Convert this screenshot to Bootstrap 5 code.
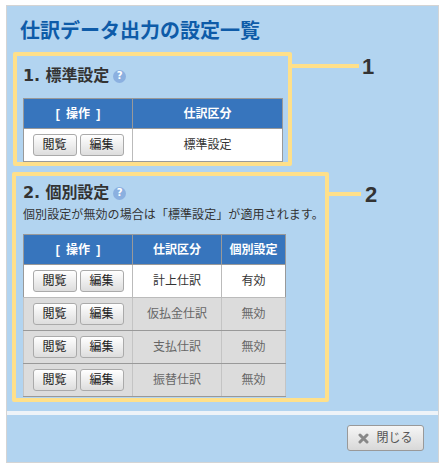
<!DOCTYPE html>
<html lang="ja">
<head>
<meta charset="utf-8">
<title>仕訳データ出力の設定一覧</title>
<link href="https://cdn.jsdelivr.net/npm/bootstrap@5.3.0/dist/css/bootstrap.min.css" rel="stylesheet">
<style>
html,body{background:#fff;margin:0;height:100%}
body{font-family:"Liberation Sans","Noto Sans CJK JP",sans-serif;font-size:12px;color:#333;overflow:hidden}
.win{position:relative;width:433px;height:458px;margin:5px 0 0 6px;background:#b2d4f0;border:1px solid #d4d4d4;box-sizing:border-box}
.win-title{margin:0;padding:12px 0 0 13px;height:46px;font-size:20px;line-height:26px;font-weight:700;color:#0e5ba8}
.note-a,.note-b{border:4px solid #ffe08a;border-radius:2px;box-sizing:border-box}
.note-a{width:279px;height:114px;margin-left:6px;padding:8px 0 0 6px}
.note-b{width:317px;height:230px;margin:6px 0 0 5px;padding:5px 0 0 7px}
.sec-title{margin:0;font-family:"DejaVu Sans","Noto Sans CJK JP",sans-serif;font-size:16px;line-height:24px;font-weight:700;color:#333;display:flex;align-items:center;gap:4px;letter-spacing:-.1px}
.sec-note{margin:1px 0 0;line-height:18px;font-size:12px;color:#333;letter-spacing:.08px}
.qm{display:inline-flex;align-items:center;justify-content:center;width:13px;height:13px;border-radius:50%;background:#8bb0e0;color:#fff;font-size:10px;font-weight:700;line-height:1}
.tbl{border-collapse:collapse;margin:0;table-layout:fixed;background:#fff;border:1px solid #999}
.note-a .tbl{margin-top:10px;width:260px}
.note-b .tbl{margin-top:10px;width:263px}
.tbl th{background:#3775bd;color:#fff;font-size:12px;font-weight:700;height:30px;padding:0;text-align:center;border:1px solid #999;word-spacing:3px}
.tbl td{height:33px;padding:0;text-align:center;border:1px solid #bbb;color:#333;font-size:12px;vertical-align:middle}
.tbl tr.off td{background:#dcdcdc;color:#666;border-color:#c4c4c4;border-top-color:#999;border-bottom-color:#999}
.tbl td:first-child{border-left-color:#999}
.tbl td:last-child{border-right-color:#999}
.tbl tr:last-child td{border-bottom-color:#999}
.c1{width:109px}.c3{width:64px}
.btn-pair{display:flex;justify-content:center;gap:3px}
.mini{width:44px;height:22px;padding:0;font-size:12px;line-height:20px;color:#222;background:linear-gradient(#fff,#ddd);border:1px solid #aaa;border-radius:3px}
.rule{height:4px;background:#eef3f8;margin-top:9px}
.foot{display:flex;justify-content:flex-end;padding:10px 14px 0 0}
.shut{display:inline-flex;align-items:center;justify-content:center;gap:7px;width:77px;height:26px;padding:0;font-size:12px;color:#555;background:linear-gradient(#f6f6f6,#d8d8d8);border:1px solid #999;border-radius:3px}
.lead-line{position:absolute;height:4px;background:#ffe08a}
.lead-a{left:285px;top:58px;width:67px}
.lead-b{left:322px;top:186px;width:32px}
.lead-num{position:absolute;font-size:22px;line-height:24px;font-weight:700;color:#333}
.num-a{left:355px;top:49px}
.num-b{left:358px;top:177px}
</style>
</head>
<body>
<div class="win">
  <h1 class="win-title">仕訳データ出力の設定一覧</h1>
  <section class="note-a">
    <h2 class="sec-title">1. 標準設定 <span class="qm">?</span></h2>
    <table class="tbl">
      <colgroup><col class="c1"><col></colgroup>
      <thead><tr><th>[ 操作 ]</th><th>仕訳区分</th></tr></thead>
      <tbody><tr><td><div class="btn-pair"><button class="btn mini">閲覧</button><button class="btn mini">編集</button></div></td><td>標準設定</td></tr></tbody>
    </table>
  </section>
  <section class="note-b">
    <h2 class="sec-title">2. 個別設定 <span class="qm">?</span></h2>
    <p class="sec-note">個別設定が無効の場合は「標準設定」が適用されます。</p>
    <table class="tbl">
      <colgroup><col class="c1"><col><col class="c3"></colgroup>
      <thead><tr><th>[ 操作 ]</th><th>仕訳区分</th><th>個別設定</th></tr></thead>
      <tbody>
        <tr><td><div class="btn-pair"><button class="btn mini">閲覧</button><button class="btn mini">編集</button></div></td><td>計上仕訳</td><td>有効</td></tr>
        <tr class="off"><td><div class="btn-pair"><button class="btn mini">閲覧</button><button class="btn mini">編集</button></div></td><td>仮払金仕訳</td><td>無効</td></tr>
        <tr class="off"><td><div class="btn-pair"><button class="btn mini">閲覧</button><button class="btn mini">編集</button></div></td><td>支払仕訳</td><td>無効</td></tr>
        <tr class="off"><td><div class="btn-pair"><button class="btn mini">閲覧</button><button class="btn mini">編集</button></div></td><td>振替仕訳</td><td>無効</td></tr>
      </tbody>
    </table>
  </section>
  <div class="rule"></div>
  <div class="foot">
    <button class="btn shut"><svg width="11" height="11" viewBox="0 0 11 11"><path d="M2 2 9 9M9 2 2 9" stroke="#888" stroke-width="3" stroke-linecap="round"/></svg>閉じる</button>
  </div>
  <span class="lead-line lead-a"></span><span class="lead-num num-a">1</span>
  <span class="lead-line lead-b"></span><span class="lead-num num-b">2</span>
</div>
<script src="https://cdn.jsdelivr.net/npm/bootstrap@5.3.0/dist/js/bootstrap.bundle.min.js"></script>
</body>
</html>
